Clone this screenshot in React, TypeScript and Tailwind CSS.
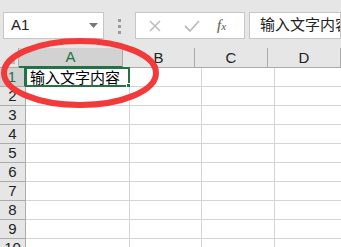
import React from 'react';

const cols = [
  { name: 'A', w: 104 },
  { name: 'B', w: 72 },
  { name: 'C', w: 73 },
  { name: 'D', w: 73 },
];
const rows = [1, 2, 3, 4, 5, 6, 7, 8, 9, 10];

export default function App() {
  return (
    <div
      className="relative w-[341px] h-[247px] overflow-hidden bg-[#e6e6e6]"
      style={{ fontFamily: '"Liberation Sans", "Noto Sans CJK SC", sans-serif' }}
    >
      {/* formula bar */}
      <div className="flex items-start h-[48px] pt-[12px] pl-[3px]">
        <div className="flex items-center justify-between w-[101px] h-[27px] bg-white border border-[#c6c6c6] pl-[7px] pr-[5px]">
          <span className="text-[15px] text-[#222]">A1</span>
          <svg width="9" height="5" viewBox="0 0 9 5">
            <path d="M0 0 L9 0 L4.5 5 Z" fill="#777" />
          </svg>
        </div>
        <div className="flex flex-col gap-[3px] w-[31px] items-center pt-[7px]">
          <span className="w-[3px] h-[3px] bg-[#9a9a9a]" />
          <span className="w-[3px] h-[3px] bg-[#9a9a9a]" />
          <span className="w-[3px] h-[3px] bg-[#9a9a9a]" />
        </div>
        <div className="flex items-center w-[110px] h-[27px] bg-white border border-[#c6c6c6]">
          <svg width="14" height="14" viewBox="0 0 14 14" className="ml-[12px]">
            <path d="M2 2 L12 12 M12 2 L2 12" stroke="#bdbdbd" strokeWidth="1.6" />
          </svg>
          <svg width="16" height="14" viewBox="0 0 16 14" className="ml-[22px]">
            <path d="M1 7 L6 12 L15 2" stroke="#bdbdbd" strokeWidth="1.8" fill="none" />
          </svg>
          <span className="ml-[17px] text-[15px] italic text-[#555]" style={{ fontFamily: '"Liberation Serif", serif' }}>
            f<span className="text-[11px]">x</span>
          </span>
        </div>
        <div className="flex items-center ml-[4px] h-[27px] flex-1 bg-white border border-[#c6c6c6] pl-[10px] whitespace-nowrap overflow-hidden">
          <span className="text-[15px] text-[#222]">输入文字内容</span>
        </div>
      </div>

      {/* grid */}
      <div className="flex flex-col">
        <div className="flex h-[20px]">
          <div className="relative w-[26px] border-r border-b border-[#ababab] bg-[#e6e6e6]">
            <svg width="10" height="10" viewBox="0 0 10 10" className="absolute right-[3px] bottom-[3px]">
              <path d="M10 0 L10 10 L0 10 Z" fill="#b8b8b8" />
            </svg>
          </div>
          {cols.map((c, i) => (
            <div
              key={c.name}
              className={
                i === 0
                  ? 'flex items-end justify-center shrink-0 w-[104px] bg-[#d2d2d2] border-r border-[#ababab] border-b-2 border-b-[#217346] text-[#217346] text-[15px] leading-[18px]'
                  : 'flex items-end justify-center shrink-0 bg-[#e6e6e6] border-r border-b border-[#ababab] text-[#222] text-[15px] leading-[19px]'
              }
              style={{ width: c.w }}
            >
              {c.name}
            </div>
          ))}
        </div>
        {rows.map((r) => (
          <div key={r} className="flex h-[19px]">
            <div
              className={
                r === 1
                  ? 'flex items-center justify-center shrink-0 w-[26px] bg-[#d2d2d2] border-r-2 border-r-[#217346] border-b border-b-[#ababab] text-[#217346] text-[15px]'
                  : 'flex items-center justify-center shrink-0 w-[26px] bg-[#e6e6e6] border-r border-b border-[#ababab] text-[#222] text-[15px]'
              }
            >
              {r}
            </div>
            {cols.map((c, i) => (
              <div
                key={c.name}
                className="relative shrink-0 bg-white border-r border-b border-[#d4d4d4]"
                style={{ width: c.w }}
              >
                {r === 1 && i === 0 && (
                  <div className="absolute left-[-1px] top-[-1px] w-[105px] h-[20px] border-2 border-[#217346] flex items-center pl-[3px]">
                    <span className="text-[15px] text-black leading-none whitespace-nowrap">输入文字内容</span>
                    <span className="absolute right-[-4px] bottom-[-4px] w-[6px] h-[6px] bg-[#217346] border border-white" />
                  </div>
                )}
              </div>
            ))}
          </div>
        ))}
      </div>

      {/* red annotation ellipse */}
      <svg className="absolute left-0 top-0 pointer-events-none" width="341" height="247" viewBox="0 0 341 247">
        <ellipse cx="80" cy="73" rx="76" ry="32" fill="none" stroke="#f23a3a" strokeWidth="6" />
      </svg>
    </div>
  );
}
